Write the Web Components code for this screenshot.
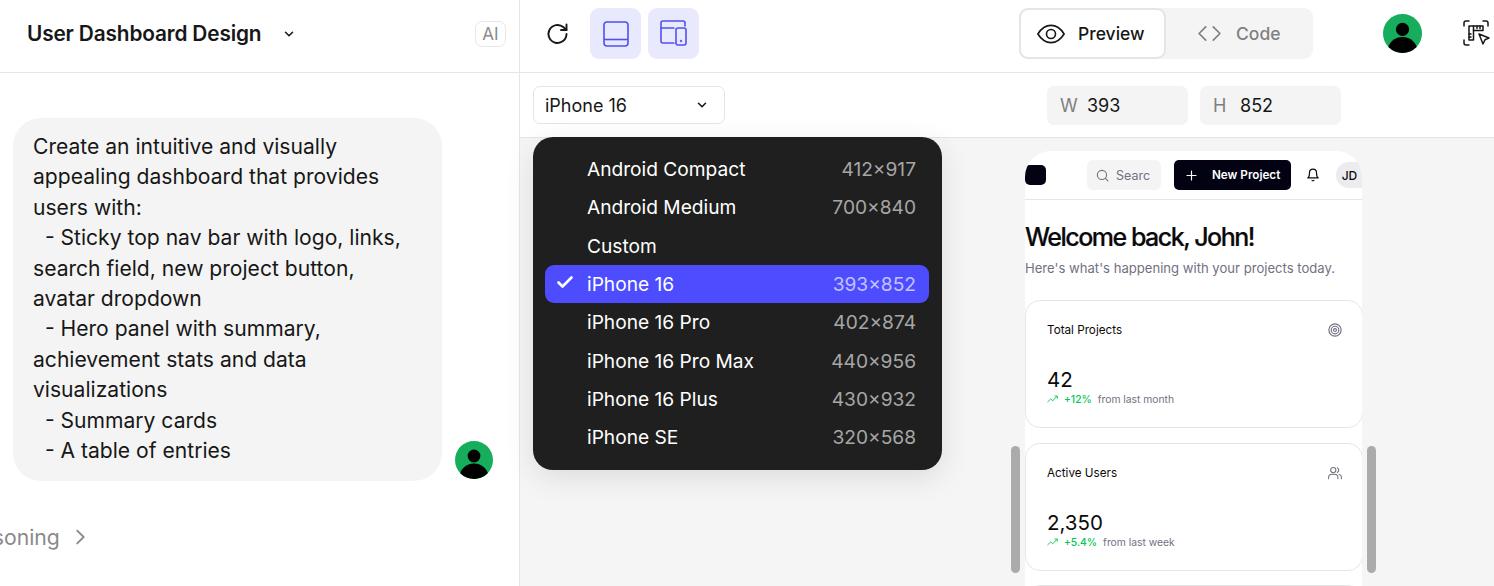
<!DOCTYPE html>
<html lang="en"><head><meta charset="utf-8"><title>User Dashboard Design</title>
<style>
html,body{margin:0;height:100%;overflow:hidden;background:#fff}
body{font-family:Inter,"Liberation Sans",sans-serif;color:#171717}
</style></head><body>
<app-shell></app-shell>
<script>
function el(name, html){
  customElements.define(name, class extends HTMLElement{
    constructor(){super();this.attachShadow({mode:'open'}).innerHTML=typeof html==='function'?html(this):html;}
  });
}
const chev=(s=14,c='#171717')=>`<svg width="${s}" height="${s}" viewBox="0 0 24 24" fill="none" stroke="${c}" stroke-width="2.6" stroke-linecap="round" stroke-linejoin="round"><path d="M6 9l6 6 6-6"/></svg>`;

el('user-avatar',`<style>:host{display:block;width:var(--s,38px);height:var(--s,38px);flex:none}svg{display:block;width:100%;height:100%}</style>
<svg viewBox="0 0 38 38"><defs><clipPath id="c"><circle cx="19" cy="19" r="19"/></clipPath></defs><g clip-path="url(#c)"><rect width="38" height="38" fill="#16ad5c"/><circle cx="19" cy="15" r="6.4" fill="#000"/><ellipse cx="19" cy="36" rx="14.4" ry="13.6" fill="#000"/></g></svg>`);

el('chat-pane',`<style>
:host{display:flex;flex-direction:column;width:519px;flex:none;border-right:1px solid #e5e5e5;height:100%;overflow:hidden;background:#fff}
header{height:67px;flex:none;border-bottom:1px solid #e5e5e5;display:flex;align-items:center;padding:0 13px 5px 27px;box-sizing:content-box}
h1{margin:0;padding-top:1px;font-size:20.800px;font-weight:600;line-height:1;letter-spacing:-.14px;color:#171717}
.c{margin-left:21px;display:flex}
.ai{margin-left:auto;width:31px;height:26px;box-sizing:border-box;border:1px solid #e8e8e8;border-radius:7px;display:flex;align-items:center;justify-content:center;font-size:17px;color:#8a8a8a}
.msg{display:flex;align-items:flex-end;gap:13px;padding:45px 0 0 13px}
.bubble{width:429px;box-sizing:border-box;background:#f4f4f4;border-radius:28px;padding:14px 20px 15px;font-size:21.100px;line-height:30.400px;color:#171717;white-space:pre-wrap}
user-avatar{margin-bottom:2px}
.reason{display:flex;align-items:center;gap:9px;margin:41px 0 0 -45px;font-size:21.200px;line-height:30px;color:#8a8a8a}
</style>
<header><h1>User Dashboard Design</h1><span class="c">${chev(14)}</span><span class="ai">AI</span></header>
<div class="msg"><div class="bubble">Create an intuitive and visually appealing dashboard that provides users with:
  - Sticky top nav bar with logo, links, search field, new project button, avatar dropdown
  - Hero panel with summary, achievement stats and data visualizations
  - Summary cards
  - A table of entries</div><user-avatar></user-avatar></div>
<div class="reason"><span>Reasoning</span><svg width="22" height="22" viewBox="0 0 24 24" fill="none" stroke="#8a8a8a" stroke-width="2" stroke-linecap="round" stroke-linejoin="round"><path d="M9 5l7 7-7 7"/></svg></div>`);

el('top-toolbar',`<style>
:host{display:flex;align-items:center;height:67px;flex:none;border-bottom:1px solid #e5e5e5;padding:0 4px 5px 26px;background:#fff}
.ic{display:flex;width:24px;height:24px;margin-right:20px}
.b{width:51px;height:51px;border-radius:9px;background:#e9e9fd;display:flex;align-items:center;justify-content:center;margin-right:7px;flex:none}
.seg{margin-left:313px;width:294px;height:51px;background:#f4f4f4;border-radius:9px;display:flex;align-items:center;flex:none}
.t{display:flex;align-items:center;height:51px;box-sizing:border-box;font-size:17.500px;font-weight:500}
.on{width:147px;background:#fff;border:2px solid #e5e5e5;border-radius:9px;padding-left:16px;gap:13px;color:#171717}
.off{color:#808080;padding-left:32px;gap:15px}
user-avatar{--s:39px;margin-left:70px}
.scan{margin-left:41px;display:flex}
</style>
<span class="ic"><svg width="24" height="24" viewBox="0 0 24 24" fill="none" stroke="#171717" stroke-width="1.9" stroke-linecap="round" stroke-linejoin="round"><path d="M20.500 12a9 9 0 1 1-3-6.700L20.500 8"/><path d="M20.500 2.500V8H15"/></svg></span>
<span class="b"><svg width="26" height="26" viewBox="0 0 26 26" fill="none" stroke="#5050ee" stroke-width="1.6"><rect x="1" y="1" width="24" height="24" rx="3"/><path d="M1 18.500h24"/></svg></span>
<span class="b"><svg width="27" height="27" viewBox="0 0 27 27" fill="none" stroke="#5050ee" stroke-width="1.6" stroke-linecap="round" stroke-linejoin="round"><path d="M25 6V3a2 2 0 0 0-2-2H3a2 2 0 0 0-2 2v18a2 2 0 0 0 2 2h11"/><path d="M1 8h13"/><rect x="16" y="8" width="10" height="17" rx="2"/><circle cx="21" cy="21" r=".4"/></svg></span>
<div class="seg"><span class="t on"><svg width="28" height="20" viewBox="0 0 31 22" fill="none" stroke="#171717" stroke-width="1.800"><path d="M1 11C5 4.500 10 1.500 15.500 1.500S26 4.500 30 11c-4 6.500-9 9.500-14.500 9.500S5 17.500 1 11z"/><circle cx="15.500" cy="11" r="5"/></svg>Preview</span>
<span class="t off"><svg width="23" height="17" viewBox="0 0 24 18" fill="none" stroke="#808080" stroke-width="1.8" stroke-linecap="round" stroke-linejoin="round"><path d="M8 2L1 9l7 7M16 2l7 7-7 7"/></svg>Code</span></div>
<user-avatar></user-avatar>
<span class="scan"><svg width="28" height="27" viewBox="0 0 28 27" fill="none" stroke="#171717" stroke-width="1.5" stroke-linecap="round" stroke-linejoin="round"><path d="M1 6V3a2 2 0 0 1 2-2h3M20 1h3a2 2 0 0 1 2 2v3M1 20v3a2 2 0 0 0 2 2h3"/><path d="M6 20V6h14v4.500h-9.500V20z"/><path d="M10.500 10.500V6M14 8.500V6M17 8.500V6M6 14h2M6 17h2"/><path d="M16 14l10 4-4 1.700L20 24z" fill="#fff"/></svg></span>`);

el('device-bar',`<style>
:host{display:flex;align-items:center;height:64px;flex:none;border-bottom:1px solid #e5e5e5;padding:0 0 0 13px;background:#fff;box-sizing:content-box}
.sel{width:192px;height:38px;box-sizing:border-box;border:1px solid #e5e5e5;border-radius:7px;display:flex;align-items:center;justify-content:space-between;padding:0 15px 0 11px;font-size:18px;color:#171717}
.f{width:141px;height:39px;background:#f4f4f4;border-radius:7px;display:flex;align-items:center;padding-left:13px;font-size:18px;box-sizing:border-box;color:#171717}
.f i{font-style:normal;color:#808080;width:27px}
.w{margin-left:322px}.h{margin-left:12px}
</style>
<div class="sel"><span>iPhone 16</span>${chev(14)}</div>
<div class="f w"><i>W</i><span>393</span></div><div class="f h"><i>H</i><span>852</span></div>`);

el('device-item',h=>`<style>
:host{display:flex;align-items:center;height:38.300px;border-radius:9px;padding:0 13px 0 42px;font-size:19.150px;color:#fff;position:relative;justify-content:space-between}
:host([sel]){background:#4d4dff}
.d{color:#a6a6a6}
:host([sel]) .d{color:#c2c2ff}
svg{position:absolute;left:12px;top:10px}
</style>${h.hasAttribute('sel')?'<svg width="16" height="14" viewBox="0 0 16 14" fill="none" stroke="#fff" stroke-width="2.600" stroke-linecap="round" stroke-linejoin="round"><path d="M1.500 7.500l4 4L14.500 2.500"/></svg>':''}<span><slot></slot></span><span class="d">${h.getAttribute('d')||''}</span>`);

el('device-menu',`<style>
:host{display:block;position:absolute;left:533px;top:137px;width:409px;height:333px;box-sizing:border-box;background:#1f1f1f;border-radius:20px;padding:13px 13px 0 12px;box-shadow:0 8px 30px rgba(0,0,0,.1);z-index:5}
</style><slot></slot>`);

el('stat-card',h=>`<style>
:host{display:block;height:128px;box-sizing:border-box;border:1px solid #e5e5e5;border-radius:15px;padding:21px 20px 0 21px;background:#fff;flex:none;width:338px}
.top{display:flex;justify-content:space-between;align-items:center;height:16px;font-size:11.700px;color:#0a0a0a}
.v{margin-top:28px;font-size:20.500px;line-height:28px;color:#0a0a0a}
.s{display:flex;align-items:center;height:12px;margin-top:-1px;font-size:10.300px;color:#717182}
.s svg{margin-right:6px}
.g{color:#00c950;font-weight:500;margin-right:6px}
</style><div class="top"><span>${h.getAttribute('t')||''}</span><slot></slot></div><div class="v">${h.getAttribute('v')||''}</div>
${h.getAttribute('c')?`<div class="s"><svg width="11" height="8" viewBox="0 0 11 8" fill="none" stroke="#00c950" stroke-width=".9"><path d="M.5 7l3.200-3 2 1.800L10 1.200M7.500 1H10.300v2.800"/></svg><span class="g">${h.getAttribute('c')}</span><span>${h.getAttribute('f')}</span></div>`:''}`);

el('phone-preview',`<style>
:host{display:block;width:337px;height:435px;overflow:hidden;background:#fff;border-radius:26px 26px 0 0;margin:13px 0 0 505px;flex:none}
.nav{height:48px;border-bottom:1px solid #e5e5e5;display:flex;align-items:center}
.logo{width:21px;height:20px;background:#030213;border-radius:5px;margin-top:-1px;flex:none}
.search{margin-left:41px;width:74px;height:30px;background:#f4f4f5;border-radius:6px;display:flex;align-items:center;gap:7px;padding-left:9px;box-sizing:border-box;font-size:12.500px;color:#717182;overflow:hidden;flex:none}
.search span{display:block;width:34px;overflow:hidden;white-space:nowrap}
.np{margin-left:13px;width:117px;height:30px;background:#030213;border-radius:5px;color:#fff;display:flex;align-items:center;font-size:11.700px;font-weight:600;box-sizing:border-box;padding-left:12px;gap:15px;flex:none;white-space:nowrap}
.bell{margin-left:15px;display:flex;flex:none}
.jd{margin-left:16px;width:27px;height:26px;border-radius:13px 0 0 13px;background:#ececf0;font-size:12px;font-weight:500;color:#0a0a0a;display:flex;align-items:center;justify-content:center;flex:none}
h2{margin:0;padding-top:23px;font-size:25px;line-height:28px;font-weight:500;letter-spacing:-1.500px;color:#0a0a0a;-webkit-text-stroke:.2px #0a0a0a;white-space:nowrap}
p{margin:8px 0 0;font-size:13.100px;line-height:18px;color:#717182;white-space:nowrap}
.cards{display:flex;flex-direction:column;gap:14.500px;margin-top:23px}
</style>
<div class="nav"><span class="logo"></span>
<div class="search"><svg width="13" height="13" viewBox="0 0 24 24" fill="none" stroke="#717182" stroke-width="2" stroke-linecap="round"><circle cx="11" cy="11" r="8.500"/><path d="M22 22l-5-5"/></svg><span>Search</span></div>
<div class="np"><svg width="11" height="11" viewBox="0 0 11 11" fill="none" stroke="#fff" stroke-width="1.200" stroke-linecap="round"><path d="M5.500 1v9M1 5.500h9"/></svg>New Project</div>
<span class="bell"><svg width="14" height="14" viewBox="0 0 24 24" fill="none" stroke="#0a0a0a" stroke-width="2" stroke-linecap="round" stroke-linejoin="round"><path d="M6 8a6 6 0 0 1 12 0c0 7 3 9 3 9H3s3-2 3-9"/><path d="M10.300 21a2 2 0 0 0 3.400 0"/></svg></span>
<span class="jd">JD</span></div>
<h2>Welcome back, John!</h2>
<p>Here's what's happening with your projects today.</p>
<div class="cards">
<stat-card t="Total Projects" v="42" c="+12%" f="from last month"><svg width="14" height="14" viewBox="0 0 24 24" fill="none" stroke="#717182" stroke-width="2"><circle cx="12" cy="12" r="10.500"/><circle cx="12" cy="12" r="6.500"/><circle cx="12" cy="12" r="2.500"/></svg></stat-card>
<stat-card t="Active Users" v="2,350" c="+5.4%" f="from last week"><svg width="14" height="14" viewBox="0 0 24 24" fill="none" stroke="#717182" stroke-width="1.800" stroke-linecap="round"><circle cx="9" cy="7" r="4.500"/><path d="M1 22v-2a6 6 0 0 1 6-6h4a6 6 0 0 1 6 6v2M16 3a4.500 4.500 0 0 1 0 8M19 14a6 6 0 0 1 4 6v2"/></svg></stat-card>
<stat-card></stat-card>
</div>`);

el('scroll-thumb',`<style>:host{display:block;position:absolute;top:446px;width:9px;height:127px;border-radius:5px;background:#ababab;left:var(--x);z-index:2}</style>`);

el('app-shell',`<style>
:host{display:flex;width:1494px;height:586px;position:relative;overflow:hidden}
.r{flex:1;display:flex;flex-direction:column;min-width:0}
.canvas{flex:1;background:#f5f5f5;display:flex;min-height:0;overflow:hidden}
</style>
<chat-pane></chat-pane>
<div class="r"><top-toolbar></top-toolbar><device-bar></device-bar><div class="canvas"><phone-preview></phone-preview></div></div>
<device-menu>
<device-item d="412×917">Android Compact</device-item>
<device-item d="700×840">Android Medium</device-item>
<device-item>Custom</device-item>
<device-item sel d="393×852">iPhone 16</device-item>
<device-item d="402×874">iPhone 16 Pro</device-item>
<device-item d="440×956">iPhone 16 Pro Max</device-item>
<device-item d="430×932">iPhone 16 Plus</device-item>
<device-item d="320×568">iPhone SE</device-item>
</device-menu>
<scroll-thumb style="--x:1011px"></scroll-thumb><scroll-thumb style="--x:1367px"></scroll-thumb>`);
</script>
</body></html>
